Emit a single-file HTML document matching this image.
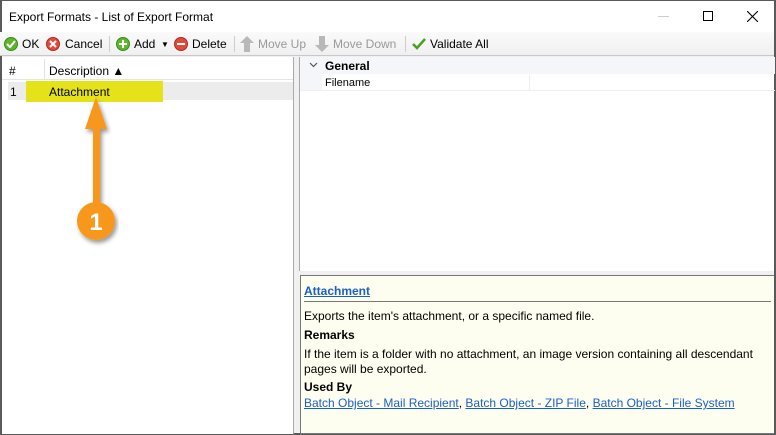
<!DOCTYPE html>
<html><head><style>
*{margin:0;padding:0;box-sizing:border-box}
body{width:776px;height:435px;overflow:hidden;background:#fff;font-family:"Liberation Sans",sans-serif;font-size:12px;color:#000;position:relative}
.win{position:absolute;left:0;top:0;width:776px;height:435px;border:2px solid #5a5a5a;border-top-width:1px;background:#f0f0f0}
.title{position:absolute;left:0;top:0;width:772px;height:31px;background:#fff;font-size:12px}
.title span{position:absolute;left:7px;top:9px}
.tb{position:absolute;left:-2px;top:31px;width:774px;height:24px;background:linear-gradient(#fafafa,#f0f0f0);border-bottom:1px solid #c8c8cc}
.tb .i{position:absolute;top:5px;font-size:12px}
.ic{position:absolute;top:5px;width:14px;height:14px;border-radius:50%}
.sep{position:absolute;top:4px;width:1px;height:16px;background:#ccc}
.left{position:absolute;left:0;top:56px;width:292px;height:377px;background:#fff;border-right:1px solid #aaa}
.right{position:absolute;left:297px;top:56px;width:475px;height:214px;background:#fff;border-left:1px solid #aaa}
.help{position:absolute;left:298px;top:274px;width:474px;height:159px;background:#fefef0;border:1px solid #777;border-right:none}
a{color:#1a5fc8;text-decoration:underline}
</style></head><body>
<div class="win">
<div class="title"><span>Export Formats - List of Export Format</span>
<div style="position:absolute;left:656px;top:15px;width:11px;height:1px;background:#ccc"></div>
<div style="position:absolute;left:701px;top:10px;width:10px;height:10px;border:1px solid #000"></div>
<svg style="position:absolute;left:745px;top:10px" width="11" height="11"><path d="M0 0L11 11M11 0L0 11" stroke="#000" stroke-width="1.1"/></svg>
</div>
<div class="tb">
<div class="ic" style="left:4px;background:#5cb82a;border:1px solid #3a8a1a"></div><svg style="position:absolute;left:6px;top:8px" width="10" height="8"><path d="M1 4L4 7L9 1" stroke="#fff" stroke-width="2" fill="none"/></svg>
<span class="i" style="left:22px">OK</span>
<div class="ic" style="left:46px;background:#e04a3a;border:1px solid #b02a20"></div><svg style="position:absolute;left:49px;top:8px" width="8" height="8"><path d="M1 1L7 7M7 1L1 7" stroke="#fff" stroke-width="2"/></svg>
<span class="i" style="left:65px">Cancel</span>
<div class="sep" style="left:109px"></div>
<div class="ic" style="left:116px;background:#5cb82a;border:1px solid #3a8a1a"></div><svg style="position:absolute;left:118px;top:7px" width="10" height="10"><path d="M5 1V9M1 5H9" stroke="#fff" stroke-width="2"/></svg>
<span class="i" style="left:134px">Add</span><span class="i" style="left:161px;font-size:8px;top:8px">▼</span>
<div class="ic" style="left:174px;background:#e04a3a;border:1px solid #b02a20"></div><div style="position:absolute;left:177px;top:11px;width:8px;height:2px;background:#fff"></div>
<span class="i" style="left:192px">Delete</span>
<div class="sep" style="left:234px"></div>
<svg style="position:absolute;left:240px;top:4px" width="14" height="16"><path d="M7 0L14 7H10V16H4V7H0Z" fill="#b8b8b8"/></svg>
<span class="i" style="left:258px;color:#999">Move Up</span>
<svg style="position:absolute;left:315px;top:4px" width="14" height="16"><path d="M7 16L14 9H10V0H4V9H0Z" fill="#b8b8b8"/></svg>
<span class="i" style="left:333px;color:#999">Move Down</span>
<div class="sep" style="left:405px"></div>
<svg style="position:absolute;left:412px;top:6px" width="14" height="12"><path d="M1 6L5 10L13 1" stroke="#4aa020" stroke-width="2.5" fill="none"/></svg>
<span class="i" style="left:430px">Validate All</span>
</div>
<div class="left">
<div style="position:absolute;left:0;top:0;width:291px;height:23px;border-bottom:1px solid #e5e5e5"></div>
<span style="position:absolute;left:7px;top:7px">#</span>
<div style="position:absolute;left:42px;top:2px;width:1px;height:20px;background:#e0e0e0"></div>
<span style="position:absolute;left:47px;top:7px">Description ▲</span>
<div style="position:absolute;left:6px;top:25px;width:285px;height:18px;background:#ececec"></div>
<div style="position:absolute;left:24px;top:24px;width:137px;height:21px;background:#e6e21a"></div>
<span style="position:absolute;left:8px;top:28px">1</span>
<span style="position:absolute;left:47px;top:28px">Attachment</span>
</div>
<div class="right">
<div style="position:absolute;left:0;top:0;width:475px;height:17px;background:#f4f6f9"></div>
<svg style="position:absolute;left:9px;top:5px" width="9" height="6"><path d="M1 1L4.5 4.5L8 1" stroke="#555" fill="none" stroke-width="1.2"/></svg>
<b style="position:absolute;left:25px;top:2px;font-size:12px">General</b>
<div style="position:absolute;left:0;top:17px;width:22px;height:16px;background:#f4f6f9"></div>
<span style="position:absolute;left:25px;top:20px;font-size:11px">Filename</span>
<div style="position:absolute;left:229px;top:17px;width:1px;height:16px;background:#eee"></div>
<div style="position:absolute;left:0;top:33px;width:475px;height:1px;background:#eee"></div>
</div>
<div class="help">
<a style="position:absolute;left:3px;top:8px;font-weight:bold">Attachment</a>
<div style="position:absolute;left:3px;top:25px;width:467px;height:1px;background:#777"></div>
<span style="position:absolute;left:3px;top:33px">Exports the item's attachment, or a specific named file.</span>
<b style="position:absolute;left:3px;top:52px">Remarks</b>
<span style="position:absolute;left:3px;top:71px">If the item is a folder with no attachment, an image version containing all descendant</span>
<span style="position:absolute;left:3px;top:86px">pages will be exported.</span>
<b style="position:absolute;left:3px;top:104px">Used By</b>
<span style="position:absolute;left:3px;top:120px;white-space:nowrap"><a>Batch Object - Mail Recipient</a>, <a>Batch Object - ZIP File</a>, <a>Batch Object - File System</a></span>
</div>
</div>
<svg style="position:absolute;left:70px;top:89px" width="60" height="160">
<defs><filter id="s"><feDropShadow dx="2" dy="3" stdDeviation="2" flood-opacity="0.4"/></filter></defs>
<g filter="url(#s)" fill="#f7981d">
<path d="M26 8L37 40H30V118H23V40H15Z"/>
<circle cx="26" cy="132" r="19"/>
</g>
<text x="26" y="141" text-anchor="middle" fill="#fff" font-family="Liberation Sans" font-weight="bold" font-size="24">1</text>
</svg>
</body></html>
